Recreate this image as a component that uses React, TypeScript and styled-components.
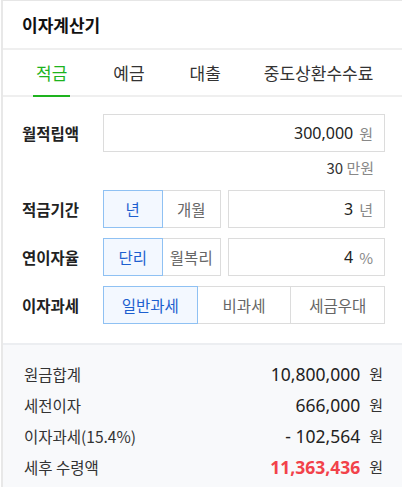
import { createGlobalStyle, styled } from "styled-components";

const GlobalStyle = createGlobalStyle`
  body {
    margin: 0;
    background: #fff;
    font-family: "Noto Sans CJK KR", "Noto Sans", sans-serif;
    color: #222;
  }
`;

const tabs = ["적금", "예금", "대출", "중도상환수수료"];

const results = [
  { label: "원금합계", value: "10,800,000" },
  { label: "세전이자", value: "666,000" },
  { label: "이자과세(15.4%)", value: "- 102,564" },
  { label: "세후 수령액", value: "11,363,436", highlight: true },
];

export default function App(): JSX.Element {
  return (
    <>
      <GlobalStyle />
      <Card>
        <Header>이자계산기</Header>
        <TabBar>
          {tabs.map((t, i) => (
            <Tab key={t} $active={i === 0}>
              {t}
            </Tab>
          ))}
        </TabBar>
        <Form>
          <Row>
            <Label>월적립액</Label>
            <Field>
              <Value>300,000</Value>
              <Unit>원</Unit>
            </Field>
          </Row>
          <Hint>
            30 <span>만원</span>
          </Hint>
          <Row>
            <Label>적금기간</Label>
            <Toggle>
              <Seg $active>년</Seg>
              <Seg>개월</Seg>
            </Toggle>
            <Field>
              <Value>3</Value>
              <Unit>년</Unit>
            </Field>
          </Row>
          <Row>
            <Label>연이자율</Label>
            <Toggle>
              <Seg $active>단리</Seg>
              <Seg>월복리</Seg>
            </Toggle>
            <Field>
              <Value>4</Value>
              <Unit>%</Unit>
            </Field>
          </Row>
          <Row>
            <Label>이자과세</Label>
            <TaxGroup>
              <Seg $active>일반과세</Seg>
              <Seg>비과세</Seg>
              <Seg>세금우대</Seg>
            </TaxGroup>
          </Row>
        </Form>
        <Result>
          {results.map((r) => (
            <ResultRow key={r.label}>
              <ResultLabel>{r.label}</ResultLabel>
              <ResultValue $highlight={r.highlight}>{r.value}</ResultValue>
              <ResultUnit>원</ResultUnit>
            </ResultRow>
          ))}
        </Result>
      </Card>
    </>
  );
}

const Card = styled.div`
  margin-left: 1px;
  border-left: 2px solid #e8e8e8;
  border-top: 1px solid #e6e6e6;
  height: 486px;
  display: flex;
  flex-direction: column;
  overflow: hidden;
`;

const Header = styled.div`
  height: 47px;
  padding-left: 19px;
  display: flex;
  align-items: center;
  font-size: 17px;
  font-weight: 700;
  color: #111;
  border-bottom: 2px solid #efefef;
`;

const TabBar = styled.div`
  display: flex;
  height: 45px;
  padding-left: 30px;
  border-bottom: 2px solid #efefef;
`;

const Tab = styled.div<{ $active?: boolean }>`
  position: relative;
  flex-shrink: 0;
  white-space: nowrap;
  padding: 0 3px;
  margin-right: 40px;
  display: flex;
  align-items: center;
  font-size: 17px;
  color: ${(p) => (p.$active ? "#1eb31e" : "#333")};
  &:nth-child(2) {
    margin-right: 39px;
  }
  &:nth-child(3) {
    margin-right: 37px;
  }
  &::after {
    content: "";
    display: ${(p) => (p.$active ? "block" : "none")};
    position: absolute;
    left: 0;
    right: 0;
    bottom: -2px;
    height: 2px;
    background: #1eb31e;
  }
`;

const Form = styled.div`
  padding: 17px 17px 19px 19px;
  display: flex;
  flex-direction: column;
  gap: 10px;
  border-bottom: 2px solid #eceef1;
`;

const Row = styled.div`
  display: flex;
  align-items: center;
  height: 38px;
`;

const Label = styled.div`
  width: 81px;
  font-size: 15.5px;
  font-weight: 700;
  color: #222;
  flex-shrink: 0;
`;

const Field = styled.div`
  flex: 1;
  height: 100%;
  box-sizing: border-box;
  border: 1px solid #dcdcdc;
  display: flex;
  align-items: center;
  justify-content: flex-end;
  padding-right: 11px;
  gap: 6px;
`;

const Value = styled.span`
  font-family: "Noto Sans", sans-serif;
  font-size: 16px;
  color: #222;
`;

const Unit = styled.span`
  font-size: 15px;
  color: #888;
`;

const Hint = styled.div`
  margin-top: -4px;
  margin-bottom: 2px;
  line-height: 20px;
  text-align: right;
  padding-right: 11px;
  font-size: 15px;
  color: #333;
  span {
    color: #888;
  }
`;

const Toggle = styled.div`
  display: flex;
  width: 118px;
  height: 100%;
  margin-right: 7px;
  flex-shrink: 0;
`;

const TaxGroup = styled.div`
  display: flex;
  flex: 1;
  height: 100%;
`;

const Seg = styled.div<{ $active?: boolean }>`
  flex: 1;
  box-sizing: border-box;
  display: flex;
  align-items: center;
  justify-content: center;
  font-size: 15.5px;
  color: ${(p) => (p.$active ? "#1d5fcf" : "#666")};
  background: ${(p) => (p.$active ? "#f3f8ff" : "#fff")};
  border: 1px solid ${(p) => (p.$active ? "#8fc1f3" : "#dcdcdc")};
  & + & {
    border-left: none;
  }
`;

const Result = styled.div`
  flex: 1;
  background: #f8f9fb;
  padding: 13px 19px 0 21px;
  display: flex;
  flex-direction: column;
`;

const ResultRow = styled.div`
  display: flex;
  align-items: center;
  height: 31px;
`;

const ResultLabel = styled.div`
  flex: 1;
  font-size: 15.5px;
  color: #333;
`;

const ResultValue = styled.div<{ $highlight?: boolean }>`
  font-family: "Noto Sans", sans-serif;
  font-size: 17.5px;
  font-weight: ${(p) => (p.$highlight ? 700 : 400)};
  color: ${(p) => (p.$highlight ? "#f2424a" : "#222")};
`;

const ResultUnit = styled.div`
  margin-left: 9px;
  font-size: 15px;
  color: #333;
`;
